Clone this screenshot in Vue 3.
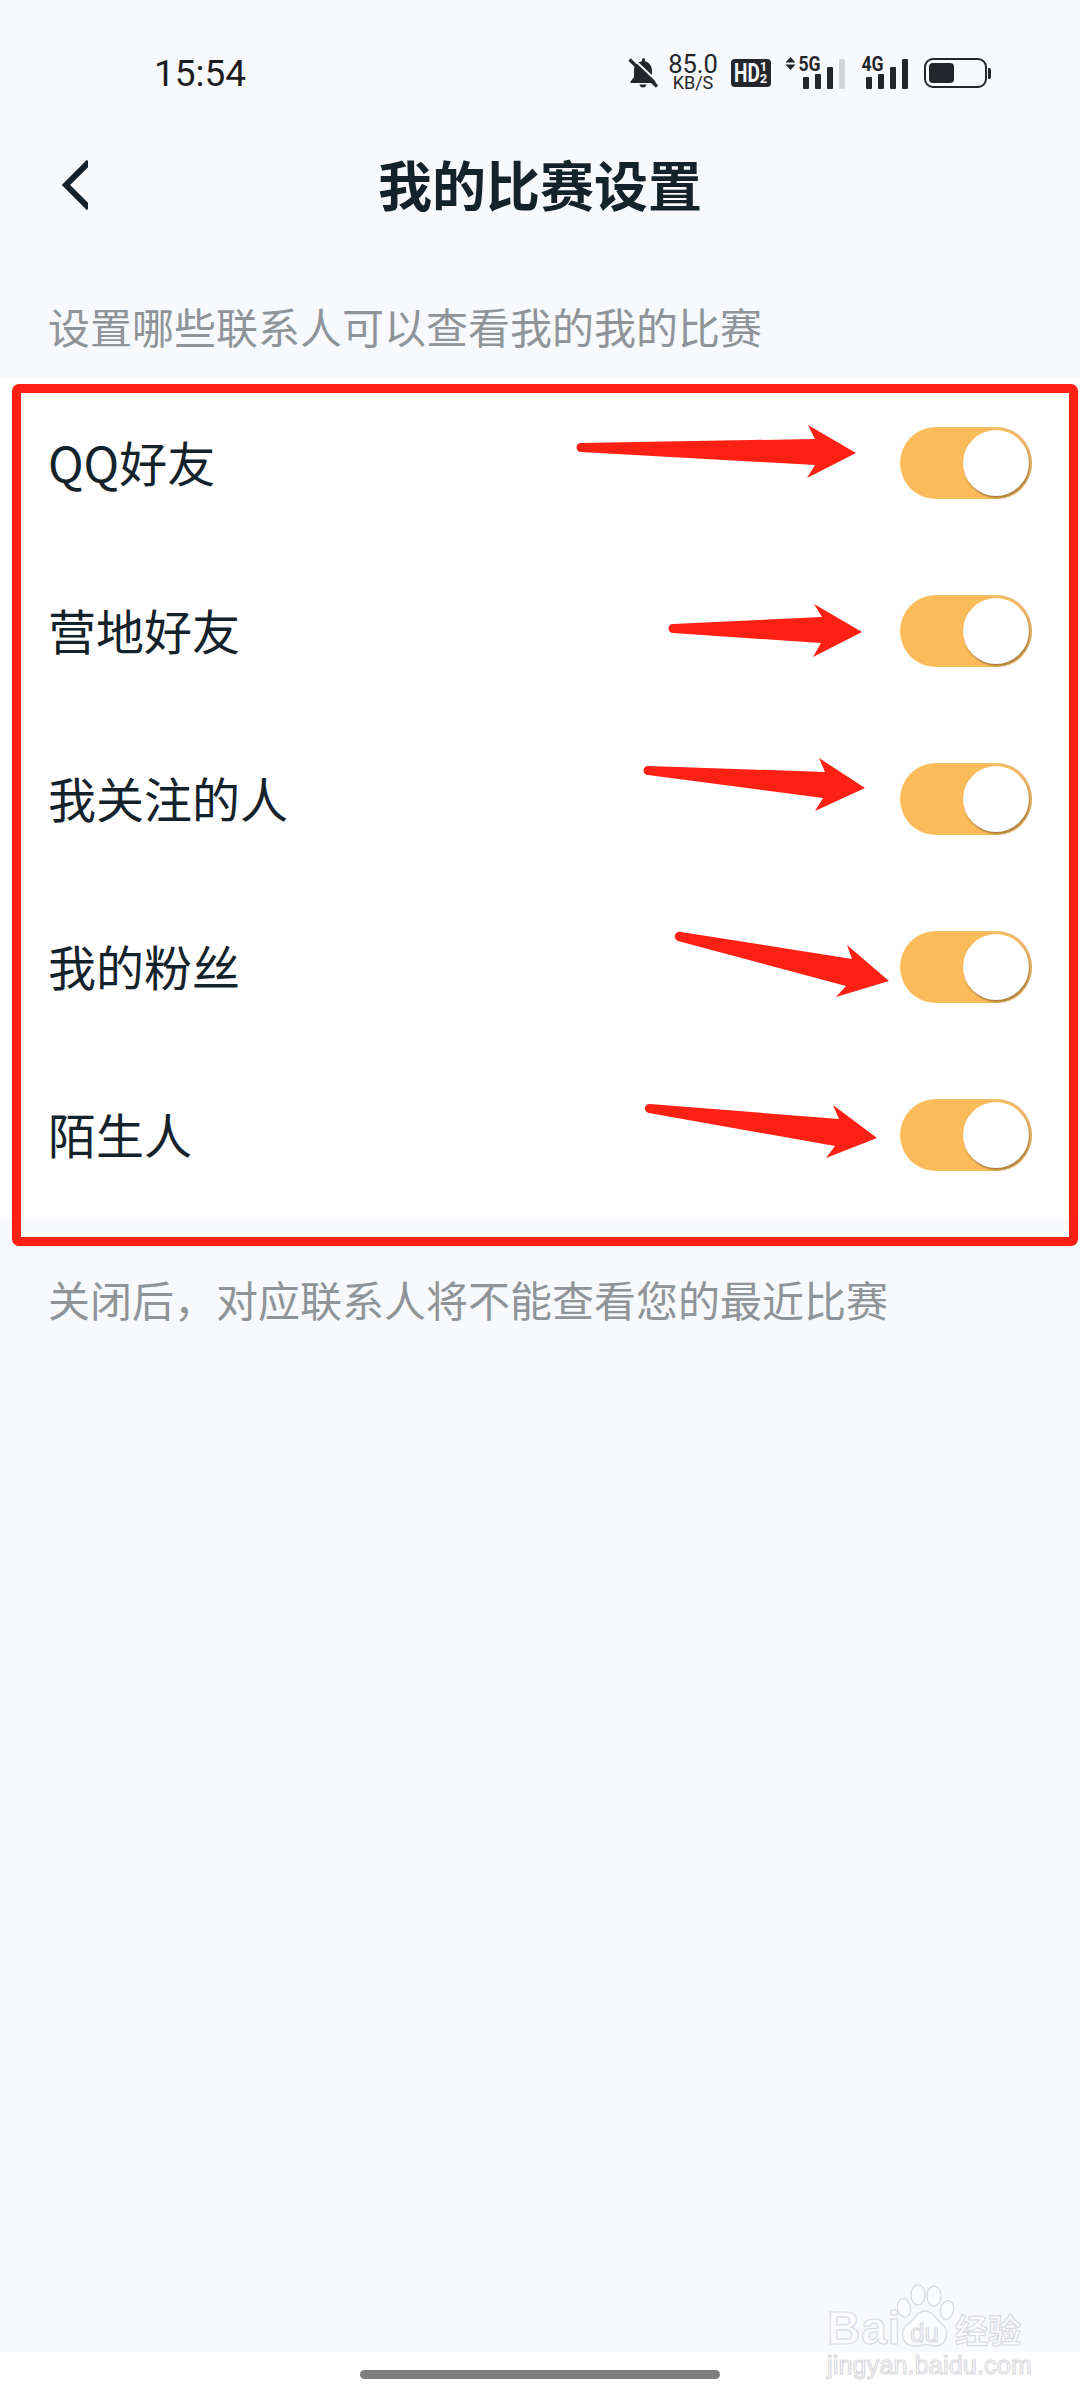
<template>
  <div class="page">
    <div class="status-bar">
      <span class="time">15:54</span>
      <div class="status-icons">
        <svg class="bell" width="30" height="30" viewBox="0 0 30 30">
          <path d="M14 .5h3v2.800c4.500 1.200 7 4.800 7 9.500v6l3.500 4.700V25H2.500v-1.500L6 19v-6.500c0-4.500 2.700-8 8-9.200z" fill="#24262b" />
          <path d="M11.500 26.500h7c-.3 1.800-1.700 3-3.500 3s-3.200-1.200-3.500-3z" fill="#24262b" />
          <path d="M3.500 -.8L31.500 25.500" stroke="#f7f9fd" stroke-width="2" />
          <path d="M1.500 1.500L29 28.500" stroke="#24262b" stroke-width="3.200" />
        </svg>
        <div class="speed">
          <span class="speed-num">85.0</span>
          <span class="speed-unit">KB/S</span>
        </div>
        <div class="hd">
          <span class="hd-text">HD</span>
          <span class="hd-sims"><i>1</i><i>2</i></span>
        </div>
        <div v-for="net in networks" :key="net.label" class="signal" :class="{ 'has-arrows': net.arrows }">
          <svg v-if="net.arrows" class="updown" width="11" height="13" viewBox="0 0 11 13">
            <path d="M5.500 0l5 5.500H.5zM5.500 13L.5 7.500h10z" fill="#24262b" />
          </svg>
          <span class="signal-label">{{ net.label }}</span>
          <div class="bars">
            <span
              v-for="(h, i) in barHeights"
              :key="i"
              class="bar"
              :class="{ off: i >= net.level }"
              :style="{ height: h + 'px' }"
            ></span>
          </div>
        </div>
        <div class="battery">
          <div class="battery-body"><div class="battery-fill"></div></div>
          <div class="battery-nub"></div>
        </div>
      </div>
    </div>

    <div class="nav">
      <svg class="back" width="26" height="50" viewBox="0 0 26 50">
        <path d="M27 2L4 25l23 23" fill="none" stroke="#14232b" stroke-width="6" />
      </svg>
      <h1 class="title">我的比赛设置</h1>
    </div>

    <p class="hint top-hint">设置哪些联系人可以查看我的我的比赛</p>

    <div class="list">
      <div v-for="item in rows" :key="item" class="row">
        <span class="row-label">{{ item }}</span>
        <div class="toggle"><div class="knob"></div></div>
      </div>
    </div>

    <p class="hint bottom-hint">关闭后，对应联系人将不能查看您的最近比赛</p>

    <div class="home-area"><div class="home-bar"></div></div>

    <!-- annotations on top of the screenshot -->
    <div class="red-frame"></div>
    <svg class="arrows" width="1080" height="1300" viewBox="0 0 1080 1300">
      <path v-for="(d, i) in arrows" :key="i" :d="d" fill="#ff2014" />
    </svg>

    <div class="watermark">
      <div class="wm-top">
        <span class="wm-bai">Bai</span>
        <div class="wm-paw">
          <svg width="58" height="64" viewBox="0 0 58 64">
            <g fill="rgba(255,255,255,.55)" stroke="#dadbde" stroke-width="1.300">
              <ellipse cx="7" cy="24" rx="6.500" ry="9.500" transform="rotate(-12 7 24)" />
              <ellipse cx="21" cy="11" rx="7" ry="10" />
              <ellipse cx="37" cy="12" rx="7" ry="10" />
              <ellipse cx="50" cy="26" rx="6.500" ry="9.500" transform="rotate(12 50 26)" />
              <path d="M28 27c8 0 10 8 17 13 8 6 6 22-8 22-4 0-6-1.500-9-1.500S23 62 18 62C4 62 2 46 11 40c7-5 9-13 17-13z" />
            </g>
          </svg>
          <span class="wm-du">du</span>
        </div>
        <span class="wm-cn">经验</span>
      </div>
      <div class="wm-url">jingyan.baidu.com</div>
    </div>
  </div>
</template>

<script setup>
const rows = ['QQ好友', '营地好友', '我关注的人', '我的粉丝', '陌生人']

const networks = [
  { label: '5G', level: 3, arrows: true },
  { label: '4G', level: 4, arrows: false },
]
const barHeights = [12, 15, 22, 30]

// red hand-drawn arrows, one per switch
const arrows = [
  'M581 443L815 439L808 425L856 453L807 478L815 465L581 452A4.500 4.500 0 0 1 581 443Z',
  'M673 624L822 617L814 604L862 632L813 657L821 643L673 633A4.500 4.500 0 0 1 673 624Z',
  'M648 766L825 772L819 758L865 788L815 811L823 798L648 775A4.500 4.500 0 0 1 648 766Z',
  'M681 932L852 959L847 945L889 981L836 997L846 986L678 941A4.700 4.700 0 0 1 681 932Z',
  'M650 1104L839 1119L833 1105L877 1138L826 1158L835 1146L649 1113A4.500 4.500 0 0 1 650 1104Z',
]
</script>

<style scoped>
.page {
  position: relative;
  width: 1080px;
  height: 2400px;
  display: flex;
  flex-direction: column;
  overflow: hidden;
  background: #f7f9fd;
  font-family: "Noto Sans CJK SC", "Noto Sans", sans-serif;
  color: #14232b;
}

.status-bar {
  height: 146px;
  flex: none;
  display: flex;
  align-items: center;
  justify-content: space-between;
  padding: 0 89px 0 154px;
  box-sizing: border-box;
}
.time {
  font-family: Roboto, sans-serif;
  font-size: 37px;
  font-weight: 400;
  color: #1b1d20;
}
.status-icons {
  display: flex;
  align-items: center;
  color: #24262b;
}
.bell {
  margin-right: 10px;
}
.speed {
  display: flex;
  flex-direction: column;
  align-items: center;
  width: 50px;
  margin-right: 13px;
  font-family: Roboto, sans-serif;
}
.speed-num {
  font-size: 25.500px;
  line-height: 20px;
}
.speed-unit {
  font-size: 18px;
  line-height: 18px;
}
.hd {
  width: 40px;
  height: 28px;
  display: flex;
  align-items: center;
  justify-content: center;
  margin-right: 14px;
  border-radius: 4px;
  background: #24262b;
  color: #f7f9fd;
  font-family: Roboto, sans-serif;
  font-weight: 700;
}
.hd-text {
  font-size: 25px;
  display: inline-block;
  transform: scaleX(0.76);
  margin: 0 -4px 0 -5px;
}
.hd-sims {
  display: flex;
  flex-direction: column;
  font-size: 13px;
  line-height: 12px;
}
.hd-sims i {
  font-style: normal;
}
.signal {
  position: relative;
  width: 46px;
  height: 32px;
  margin-right: 16px;
}
.signal.has-arrows {
  width: 60px;
  margin-right: 17px;
}
.updown {
  position: absolute;
  left: 0;
  top: 0;
}
.signal-label {
  position: absolute;
  right: 23px;
  top: -3px;
  font-family: Roboto, sans-serif;
  font-size: 20px;
  font-weight: 700;
  line-height: 20px;
  display: inline-block;
  transform: scaleX(0.88);
}
.bars {
  position: absolute;
  right: 0;
  bottom: 0;
  display: flex;
  align-items: flex-end;
  gap: 6px;
}
.bar {
  width: 6px;
  border-radius: 1px;
  background: #24262b;
}
.bar.off {
  background: #d2d4d7;
}
.battery {
  display: flex;
  align-items: center;
}
.battery-body {
  width: 63px;
  height: 30px;
  box-sizing: border-box;
  padding: 3px;
  border: 2px solid #24262b;
  border-radius: 9px;
}
.battery-fill {
  width: 25px;
  height: 100%;
  border-radius: 4px;
  background: #24262b;
}
.battery-nub {
  width: 3px;
  height: 11px;
  margin-left: 1px;
  border-radius: 0 2px 2px 0;
  background: #24262b;
}

.nav {
  height: 78px;
  flex: none;
  position: relative;
  display: flex;
  align-items: center;
  justify-content: center;
}
.back {
  position: absolute;
  left: 62px;
  top: 14px;
}
.title {
  margin: 0 0 3px;
  font-size: 54px;
  line-height: 75px;
  font-weight: 700;
}

.hint {
  margin: 0;
  padding-left: 48px;
  font-size: 42px;
  line-height: 60px;
  color: #8f9498;
}
.top-hint {
  padding-top: 72px;
  padding-bottom: 23px;
}
.bottom-hint {
  padding-top: 50px;
  flex: 1;
}

.list {
  flex: none;
  background: #fff;
}
.row {
  height: 168px;
  display: flex;
  align-items: center;
  justify-content: space-between;
  padding: 0 48px 0 48px;
}
.row-label {
  font-size: 48px;
  line-height: 60px;
  margin-bottom: 5px;
  color: #14232b;
}
.toggle {
  width: 132px;
  height: 72px;
  box-sizing: border-box;
  display: flex;
  justify-content: flex-end;
  align-items: center;
  padding-right: 3px;
  border-radius: 36px;
  background: #fbbb5b;
  box-shadow: inset -2px 0 1px #e2b877;
}
.knob {
  width: 66px;
  height: 66px;
  border-radius: 50%;
  background: #fff;
  box-shadow: 1px 2px 2px rgba(125, 85, 30, 0.6);
}

.home-area {
  height: 48px;
  flex: none;
  display: flex;
  justify-content: center;
  padding-top: 18px;
  box-sizing: border-box;
  background: #fff;
}
.home-bar {
  width: 360px;
  height: 9px;
  border-radius: 5px;
  background: #7d7d7d;
}

.red-frame {
  position: absolute;
  left: 12px;
  top: 384px;
  width: 1066px;
  height: 862px;
  box-sizing: border-box;
  border: 9px solid #ff2014;
  border-radius: 7px;
}
.arrows {
  position: absolute;
  left: 0;
  top: 0;
}

.watermark {
  position: absolute;
  left: 827px;
  top: 2284px;
  width: 200px;
  font-family: "Liberation Sans", sans-serif;
  color: rgba(255, 255, 255, 0.55);
  -webkit-text-stroke: 1.200px #dadbde;
}
.wm-top {
  display: flex;
  align-items: flex-end;
  height: 64px;
}
.wm-bai {
  font-size: 46px;
  line-height: 40px;
  font-weight: 700;
  letter-spacing: 1px;
  display: inline-block;
  width: 70px;
}
.wm-paw {
  position: relative;
  width: 58px;
  height: 64px;
  flex: none;
}
.wm-du {
  position: absolute;
  left: 13px;
  top: 36px;
  font-size: 26px;
  line-height: 26px;
  font-weight: 400;
}
.wm-cn {
  font-family: "Noto Sans CJK SC", sans-serif;
  font-size: 33px;
  line-height: 38px;
  font-weight: 700;
  white-space: nowrap;
}
.wm-url {
  margin-top: 3px;
  font-size: 25px;
  line-height: 28px;
  letter-spacing: 0.2px;
  white-space: nowrap;
}
</style>
